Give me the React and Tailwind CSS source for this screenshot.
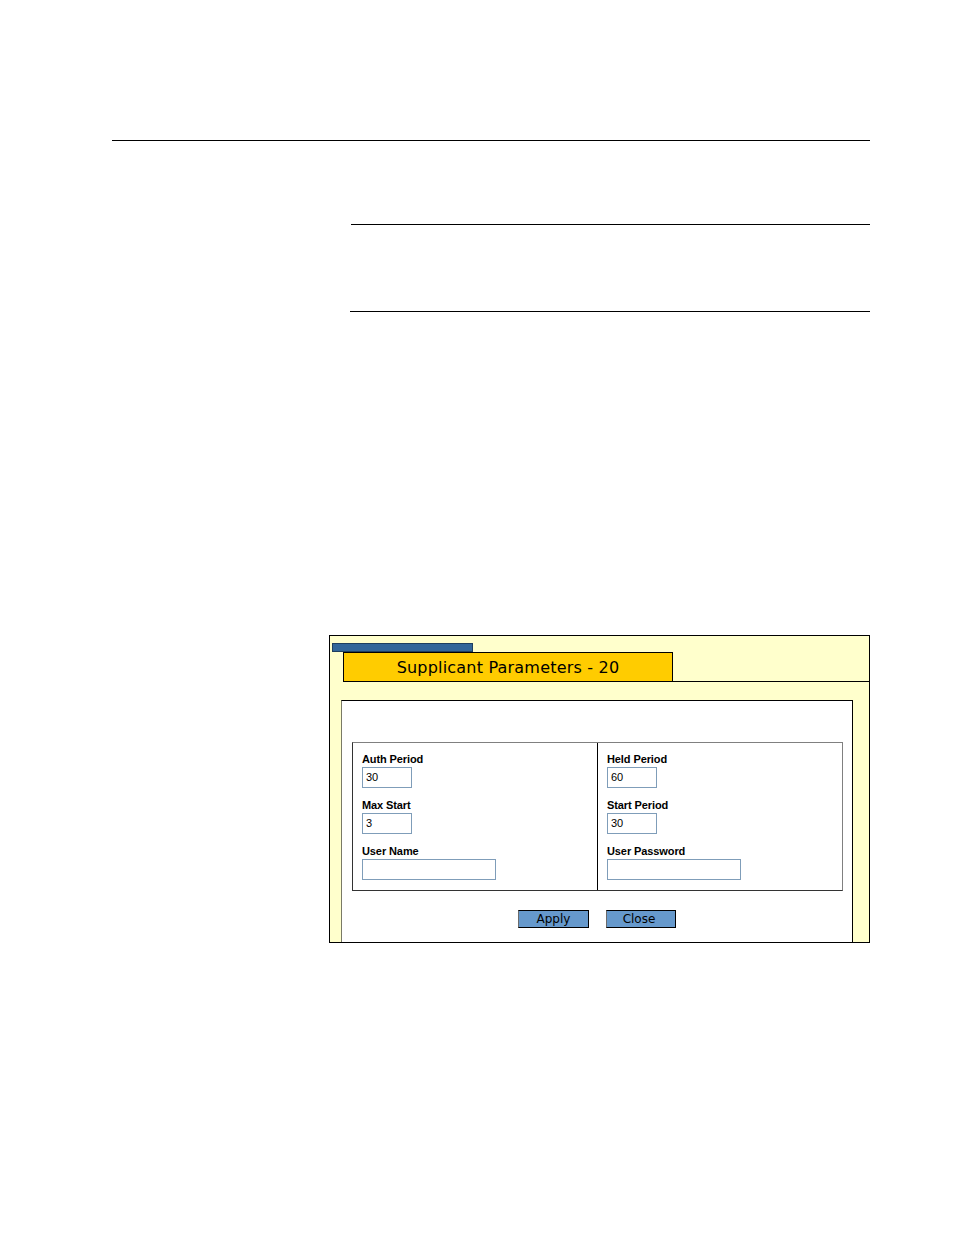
const font = { fontFamily: '"Liberation Sans", Arial, sans-serif' };

function Field({ label, value, wide }) {
  return (
    <div className="flex flex-col">
      <div className="h-[14px] text-[11px] leading-[13px] font-bold text-black tracking-[-0.1px]">{label}</div>
      <div
        className={`h-[21px] border border-[#7f9db9] bg-white text-[11px] leading-[19px] pl-[3px] text-black ${wide ? "w-[134px]" : "w-[50px]"}`}
      >
        {value}
      </div>
    </div>
  );
}

function Column({ fields, className }) {
  return (
    <div className={`flex flex-col gap-[11px] pl-[9px] pt-[10px] pb-[10px] ${className}`}>
      {fields.map((f) => (
        <Field key={f.label} {...f} />
      ))}
    </div>
  );
}

export default function App() {
  const left = [
    { label: "Auth Period", value: "30" },
    { label: "Max Start", value: "3" },
    { label: "User Name", value: "", wide: true },
  ];
  const right = [
    { label: "Held Period", value: "60" },
    { label: "Start Period", value: "30" },
    { label: "User Password", value: "", wide: true },
  ];

  return (
    <div className="w-[954px] h-[1235px] bg-white" style={font}>
      <div className="pt-[140px]">
        <div className="ml-[112px] w-[758px] h-px bg-black" />
        <div className="mt-[83px] ml-[351px] w-[519px] h-px bg-black" />
        <div className="mt-[86px] ml-[350px] w-[520px] h-px bg-black" />
      </div>

      {/* dialog */}
      <div className="mt-[323px] ml-[329px] w-[541px] h-[308px] border border-black bg-[#ffffcc] flex flex-col">
        <div className="mt-[7px] ml-[2px] w-[141px] h-[9px] bg-[#336699] border border-[#1f3f5f]" />
        <div className="flex">
          <div
            className="ml-[13px] w-[330px] h-[30px] bg-[#ffcc00] border border-black flex items-center justify-center text-[16px] tracking-[0.2px] text-black pt-[1px]"
            style={{ fontFamily: '"DejaVu Sans", Verdana, sans-serif' }}
          >
            Supplicant Parameters - 20
          </div>
          <div className="flex-1 border-b border-black" />
        </div>

        <div className="mt-[18px] ml-[11px] w-[512px] flex-1 bg-white border-l border-l-[#7a7a66] border-t border-t-black border-r border-r-black">
          <div className="mt-[41px] ml-[10px] w-[491px] h-[149px] flex border-t border-t-[#808080] border-r border-r-[#808080] border-l border-l-[#333] border-b border-b-[#333]">
            <Column fields={left} className="w-[245px] border-r border-black" />
            <Column fields={right} className="flex-1" />
          </div>
          <div
            className="mt-[19px] flex justify-center gap-[17px] text-[12px] text-black"
            style={{ fontFamily: '"DejaVu Sans", Verdana, sans-serif' }}
          >
            <div className="w-[71px] h-[18px] bg-[#6699cc] border border-black border-l-[#6b6b6b] flex items-center justify-center leading-none">
              Apply
            </div>
            <div className="w-[70px] h-[18px] bg-[#6699cc] border border-black border-l-[#6b6b6b] flex items-center justify-center leading-none pr-[4px]">
              Close
            </div>
          </div>
        </div>
      </div>
    </div>
  );
}
